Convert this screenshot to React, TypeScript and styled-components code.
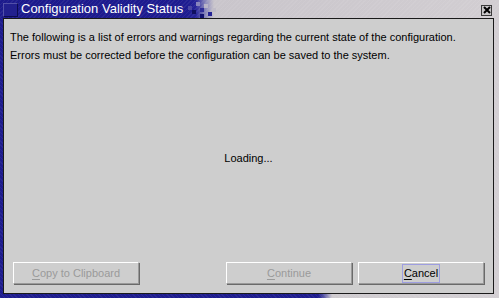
import React from "react";
import styled, { createGlobalStyle } from "styled-components";

const Global = createGlobalStyle`
  html, body { margin: 0; padding: 0; background: #1d1d8f; }
  body { font-family: "Liberation Sans", Arial, sans-serif; }
`;

const Frame = styled.div`
  width: 499px;
  height: 298px;
  box-sizing: border-box;
  display: flex;
  flex-direction: column;
  overflow: hidden;
  background:
    repeating-linear-gradient(45deg, rgba(255,255,255,0.05) 0 1px, transparent 1px 3px),
    linear-gradient(90deg, #1e1c8e 0, #1e1c8e 318px, #5c5aa8 324px, #cfcbcf 332px, #d3cfd3 100%);
`;

const TitleBar = styled.div`
  position: relative;
  height: 18px;
  flex: none;
  display: flex;
  align-items: center;
  padding: 0 7px 0 3px;
  background:
    repeating-linear-gradient(135deg, rgba(255,255,255,0.06) 0 1px, transparent 1px 3px),
    linear-gradient(90deg, #1c1a8c 0, #1e1c90 188px, #27259a 196px, #8e8cbc 206px, #c9c5cb 214px, #d2ced2 100%);
`;

const Dither = styled.span<{ $c: string }>`
  position: absolute;
  width: 4px;
  height: 4px;
  background: ${(p) => p.$c};
`;

const TitleIcon = styled.span`
  width: 13px;
  height: 12px;
  margin-top: 1px;
  flex: none;
  background: #22208e;
  border: 1px solid #5250a8;
  border-right-color: #0c0b50;
  border-bottom-color: #0c0b50;
`;

const Title = styled.span`
  margin-left: 3px;
  color: #ffffff;
  font-size: 13px;
  line-height: 18px;
  white-space: nowrap;
`;

const Spacer = styled.span`
  flex: 1;
`;

const CloseBox = styled.span`
  width: 11px;
  height: 11px;
  margin-top: 2px;
  flex: none;
  box-sizing: border-box;
  border: 1px solid #3a3a3a;
  background: #c8c6c8;
  display: flex;
  align-items: center;
  justify-content: center;
`;

const Panel = styled.div`
  flex: 1;
  margin: 0 5px 4px 3px;
  border: 1px solid #1a1a1a;
  background: #cecece;
  display: flex;
  flex-direction: column;
  font-size: 11px;
  color: #000;
`;

const Message = styled.div`
  padding: 9px 0 0 6px;
  line-height: 18px;
  white-space: nowrap;
`;

const Center = styled.div`
  flex: 1;
  display: flex;
  align-items: center;
  justify-content: center;
  padding-bottom: 10px;
`;

const ButtonRow = styled.div`
  display: flex;
  align-items: center;
  padding: 0 9px 9px 9px;
  gap: 6px;
`;

const Button = styled.div<{ $disabled?: boolean }>`
  width: 126px;
  height: 22px;
  box-sizing: border-box;
  display: flex;
  align-items: center;
  justify-content: center;
  border-top: 1px solid #ffffff;
  border-left: 1px solid #ffffff;
  border-right: 1px solid #9a9a9a;
  border-bottom: 1px solid #9a9a9a;
  box-shadow: 1px 1px 0 #6a6a6a;
  color: ${(p) => (p.$disabled ? "#9a9a9a" : "#000")};
  font-size: 11px;
  white-space: nowrap;
`;

const Focus = styled.span`
  display: inline-flex;
  align-items: center;
  height: 19px;
  padding: 0 1px;
  box-sizing: border-box;
  border: 1px solid #9e9ee0;
`;

const Mn = styled.span`
  text-decoration: underline;
  text-underline-offset: 2px;
`;

const dith: [number, number, string][] = [
  [188, 6, "#4a48a4"],
  [192, 10, "#101060"],
  [196, 2, "#8886bc"],
  [200, 8, "#2e2c98"],
  [200, 14, "#121270"],
  [204, 4, "#b8b4c8"],
  [208, 12, "#262496"],
  [212, 8, "#c0bcc8"],
];

export default function App() {
  return (
    <>
      <Global />
      <Frame>
        <TitleBar>
          {dith.map(([x, y, c], i) => (
            <Dither key={i} $c={c} style={{ left: x, top: y }} />
          ))}
          <TitleIcon />
          <Title>Configuration Validity Status</Title>
          <Spacer />
          <CloseBox>
            <svg width="8" height="8" viewBox="0 0 8 8">
              <path d="M1 1 L7 7 M7 1 L1 7" stroke="#000" strokeWidth="2" />
            </svg>
          </CloseBox>
        </TitleBar>
        <Panel>
          <Message>
            The following is a list of errors and warnings regarding the current state of the configuration.
            <br />
            Errors must be corrected before the configuration can be saved to the system.
          </Message>
          <Center>Loading...</Center>
          <ButtonRow>
            <Button $disabled>
              <Mn>C</Mn>opy to Clipboard
            </Button>
            <Spacer />
            <Button $disabled>
              <Mn>C</Mn>ontinue
            </Button>
            <Button>
              <Focus>
                <Mn>C</Mn>ancel
              </Focus>
            </Button>
          </ButtonRow>
        </Panel>
      </Frame>
    </>
  );
}
